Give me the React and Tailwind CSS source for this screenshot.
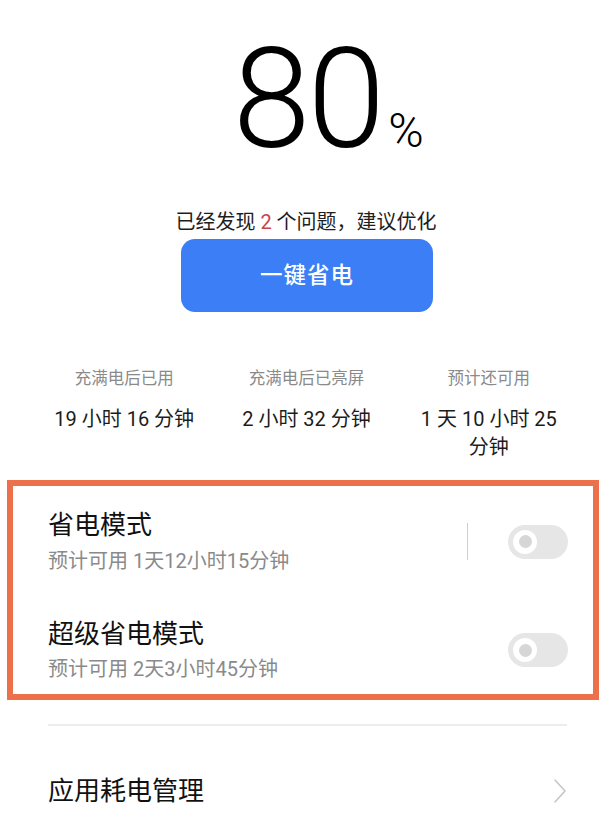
import React from "react";

function Toggle() {
  return (
    <div className="w-[60px] h-[34px] rounded-full bg-[#e6e6e6] flex items-center pl-[5px] shrink-0">
      <div className="w-[24px] h-[24px] rounded-full bg-white flex items-center justify-center">
        <div className="w-[13px] h-[13px] rounded-full bg-[#d6d6d6]" />
      </div>
    </div>
  );
}

function Stat({ label, value }) {
  return (
    <div className="flex flex-col items-center px-[12px] text-center">
      <div className="text-[16.5px] leading-[24px] text-[#8a8a8a]">{label}</div>
      <div className="mt-[14px] text-[20px] leading-[28px] text-[#1c1c1c] break-keep">{value}</div>
    </div>
  );
}

export default function App() {
  return (
    <div
      className="w-[609px] min-h-[819px] bg-white overflow-hidden"
      style={{ fontFamily: "Roboto, 'Noto Sans CJK SC', 'Noto Sans', sans-serif" }}
    >
      <div className="pt-[29px] pl-[12px] flex justify-center items-baseline">
        <span className="text-[140px] leading-none font-light text-black tracking-[-3px]">80</span>
        <span className="w-0 overflow-visible whitespace-nowrap text-[48px] leading-none font-light text-black ml-[6px]">%</span>
      </div>

      <div className="mt-[39px] text-center text-[20px] leading-[28px] text-[#1e1e1e] pl-[3px]">
        已经发现 <span className="text-[#c84646]">2</span> 个问题，建议优化
      </div>

      <div className="mt-[3px] pl-[5px] flex justify-center">
        <button className="w-[252px] h-[73px] rounded-[14px] bg-[#3b7ef5] text-white text-[22.5px] font-medium tracking-[1px]">
          一键省电
        </button>
      </div>

      <div className="mt-[55px] grid grid-cols-3 px-[33px] pr-[29px]">
        <Stat label="充满电后已用" value="19 小时 16 分钟" />
        <Stat label="充满电后已亮屏" value="2 小时 32 分钟" />
        <Stat label="预计还可用" value="1 天 10 小时 25 分钟" />
      </div>

      <div className="mt-[19px] mx-[7px] w-[592px] border-[6px] border-[#ec7049] pl-[35px] pr-[25px] pt-[22px] pb-[11px]">
        <div className="flex items-center">
          <div className="flex-1">
            <div className="text-[26px] leading-[34px] text-[#111]">省电模式</div>
            <div className="mt-[5px] text-[20px] leading-[28px] text-[#8a8a8a]">预计可用 1天12小时15分钟</div>
          </div>
          <div className="w-px h-[37px] bg-[#cfcfcf] mr-[40px]" />
          <Toggle />
        </div>
        <div className="mt-[42px] flex items-center">
          <div className="flex-1">
            <div className="text-[26px] leading-[34px] text-[#111]">超级省电模式</div>
            <div className="mt-[4px] text-[20px] leading-[28px] text-[#8a8a8a]">预计可用 2天3小时45分钟</div>
          </div>
          <Toggle />
        </div>
      </div>

      <div className="mt-[24px] mx-[48px] mr-[42px] h-[2px] bg-[#ececec]" />

      <div className="mt-[48px] pl-[48px] pr-[42px] flex items-center justify-between">
        <div className="text-[26px] leading-[34px] text-[#111]">应用耗电管理</div>
        <svg width="14" height="26" viewBox="0 0 14 26" fill="none">
          <path d="M2 2 L12 13 L2 24" stroke="#c6c6c6" strokeWidth="1.6" strokeLinecap="round" strokeLinejoin="round" />
        </svg>
      </div>
    </div>
  );
}
